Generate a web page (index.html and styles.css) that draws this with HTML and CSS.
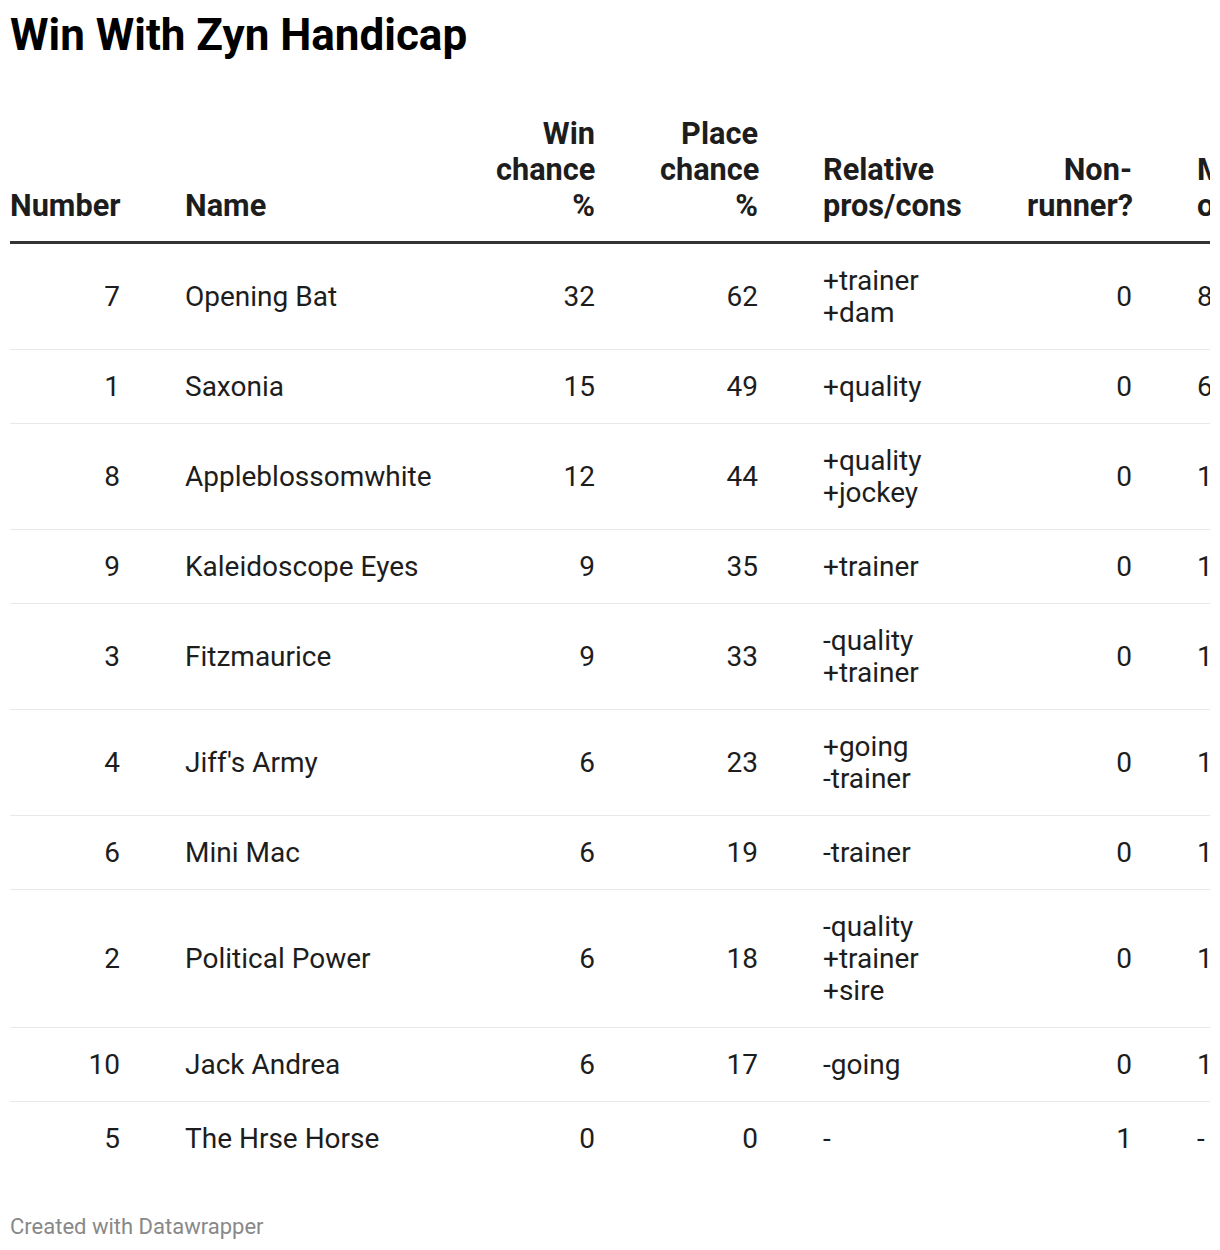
FILE: index.html
```html
<!DOCTYPE html>
<html lang="en">
<head>
<meta charset="utf-8">
<title>Win With Zyn Handicap</title>
<link rel="stylesheet" href="styles.css">
</head>
<body>
<div class="chart">
  <h1 class="title">Win With Zyn Handicap</h1>
  <div class="table-wrap">
    <table class="dw-table">
      <thead>
        <tr>
          <th class="c-num right">Number</th>
          <th class="c-name">Name</th>
          <th class="c-win right">Win chance %</th>
          <th class="c-place right">Place chance %</th>
          <th class="c-rel">Relative pros/cons</th>
          <th class="c-nr right">Non-runner?</th>
          <th class="c-odds">Market odds</th>
        </tr>
      </thead>
      <tbody>
        <tr><td class="right">7</td><td>Opening Bat</td><td class="right">32</td><td class="right">62</td><td>+trainer<br>+dam</td><td class="right">0</td><td>8/5</td></tr>
        <tr><td class="right">1</td><td>Saxonia</td><td class="right">15</td><td class="right">49</td><td>+quality</td><td class="right">0</td><td>6/1</td></tr>
        <tr><td class="right">8</td><td>Appleblossomwhite</td><td class="right">12</td><td class="right">44</td><td>+quality<br>+jockey</td><td class="right">0</td><td>15/2</td></tr>
        <tr><td class="right">9</td><td>Kaleidoscope Eyes</td><td class="right">9</td><td class="right">35</td><td>+trainer</td><td class="right">0</td><td>10/1</td></tr>
        <tr><td class="right">3</td><td>Fitzmaurice</td><td class="right">9</td><td class="right">33</td><td>-quality<br>+trainer</td><td class="right">0</td><td>10/1</td></tr>
        <tr><td class="right">4</td><td>Jiff's Army</td><td class="right">6</td><td class="right">23</td><td>+going<br>-trainer</td><td class="right">0</td><td>16/1</td></tr>
        <tr><td class="right">6</td><td>Mini Mac</td><td class="right">6</td><td class="right">19</td><td>-trainer</td><td class="right">0</td><td>16/1</td></tr>
        <tr><td class="right">2</td><td>Political Power</td><td class="right">6</td><td class="right">18</td><td>-quality<br>+trainer<br>+sire</td><td class="right">0</td><td>16/1</td></tr>
        <tr><td class="right">10</td><td>Jack Andrea</td><td class="right">6</td><td class="right">17</td><td>-going</td><td class="right">0</td><td>16/1</td></tr>
        <tr><td class="right">5</td><td>The Hrse Horse</td><td class="right">0</td><td class="right">0</td><td>-</td><td class="right">1</td><td>-</td></tr>
      </tbody>
    </table>
  </div>
  <div class="footer">Created with Datawrapper</div>
</div>
</body>
</html>
```

FILE: styles.css
```css
html, body {
  margin: 0;
  padding: 0;
  background: #ffffff;
}

body {
  font-family: Roboto, "Liberation Sans", Arial, sans-serif;
  color: #1d1d1d;
}

.chart {
  padding: 0 10px;
}

.title {
  margin: 0;
  padding-top: 10px;
  font-size: 44px;
  line-height: 50px;
  font-weight: 700;
  color: #000;
}

.table-wrap {
  width: 1200px;
  overflow: hidden;
  margin-top: 56px;
}

.dw-table {
  border-collapse: collapse;
  table-layout: fixed;
  width: 1320px;
  font-size: 28px;
  line-height: 32px;
}

.dw-table th,
.dw-table td {
  box-sizing: border-box;
}

.dw-table th {
  font-weight: 700;
  font-size: 30.7px;
  line-height: 36px;
  text-align: left;
  vertical-align: bottom;
  padding: 0 0 17px 65px;
  border-bottom: 3px solid #333333;
  color: #1d1d1d;
}

.dw-table td {
  padding: 21px 0 20px 65px;
  border-bottom: 1px solid #e8e8e8;
  vertical-align: middle;
  white-space: nowrap;
}

.dw-table tbody tr:last-child td {
  border-bottom: none;
}

.dw-table th:first-child,
.dw-table td:first-child {
  padding-left: 0;
}

.right {
  text-align: right;
}

.dw-table th.right {
  text-align: right;
}

.c-num { width: 110px; }
.c-name { width: 311px; }
.c-win { width: 164px; }
.c-place { width: 163px; }
.c-rel { width: 204px; }
.c-nr { width: 170px; }
.c-odds { width: 198px; }

.footer {
  margin-top: 38px;
  font-size: 22px;
  line-height: 28px;
  color: #888888;
}
```
